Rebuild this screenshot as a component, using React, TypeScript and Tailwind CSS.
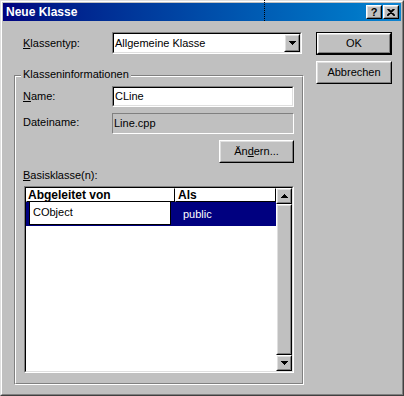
import React from 'react';

const font = { fontFamily: '"Liberation Sans", Arial, sans-serif' };

function Raised({ className = '', children }: { className?: string; children?: React.ReactNode }) {
  return (
    <div className={`border border-t-white border-l-white border-r-black border-b-black bg-[#c0c0c0] ${className}`}>
      <div className="w-full h-full border border-t-[#dfdfdf] border-l-[#dfdfdf] border-r-[#808080] border-b-[#808080] flex items-center justify-center">
        {children}
      </div>
    </div>
  );
}

function Sunken({ className = '', inner = 'bg-white', children }: { className?: string; inner?: string; children?: React.ReactNode }) {
  return (
    <div className={`border border-t-[#808080] border-l-[#808080] border-r-white border-b-white ${className}`}>
      <div className={`w-full h-full border border-t-black border-l-black border-r-[#dfdfdf] border-b-[#dfdfdf] ${inner}`}>
        {children}
      </div>
    </div>
  );
}

function Arrow({ up = false }: { up?: boolean }) {
  return (
    <svg width="7" height="4" viewBox="0 0 7 4">
      <path d={up ? 'M3.5 0 L7 4 L0 4 Z' : 'M0 0 L7 0 L3.5 4 Z'} fill="black" shapeRendering="crispEdges" />
    </svg>
  );
}

export default function App() {
  return (
    <div style={font} className="w-[404px] h-[396px] bg-[#c0c0c0] text-[11px] text-black border border-t-[#dfdfdf] border-l-[#dfdfdf] border-r-[#404040] border-b-[#404040]">
      <div className="h-full flex flex-col p-px border border-t-white border-l-white border-r-[#808080] border-b-[#808080]">
        {/* title bar */}
        <div className="relative h-[18px] flex items-center pl-[3px] pr-[2px] bg-gradient-to-r from-[#000080] to-[#1084d0]">
          <span className="text-[12px] font-bold text-white leading-none">Neue Klasse</span>
          <div className="absolute left-[261px] top-[-3px] h-[21px] border-l border-dotted border-black" />
          <div className="ml-auto flex gap-[1px]">
            <Raised className="w-[16px] h-[14px]">
              <span className="text-[11px] font-bold leading-none">?</span>
            </Raised>
            <Raised className="w-[16px] h-[14px]">
              <svg width="8" height="7" viewBox="0 0 8 7">
                <path d="M0.5 0 L7.5 7 M1.5 0 L8 6.5 M7.5 0 L0.5 7 M6.5 0 L0 6.5" stroke="black" strokeWidth="1.2" />
              </svg>
            </Raised>
          </div>
        </div>

        {/* body */}
        <div className="flex pl-[11px] pt-[11px]">
          <div className="w-[290px] flex flex-col">
            <div className="h-[22px] flex items-center">
              <span className="w-[98px] pl-[9px]"><u>K</u>lassentyp:</span>
              <Sunken className="w-[190px] h-[22px]">
                <div className="h-full flex items-center">
                  <span className="pl-[1px]">Allgemeine Klasse</span>
                  <Raised className="ml-auto w-[16px] h-[18px]">
                    <Arrow />
                  </Raised>
                </div>
              </Sunken>
            </div>

            {/* group box */}
            <div className="relative mt-[21px] h-[310px] border border-t-[#808080] border-l-[#808080] border-r-white border-b-white">
              <span className="absolute left-[6px] top-[-8px] px-[2px] bg-[#c0c0c0] leading-[13px]">Klasseninformationen</span>
              <div className="h-full border border-t-white border-l-white border-r-[#808080] border-b-[#808080] pl-[7px] flex flex-col">
                <div className="mt-[9px] flex items-center">
                  <span className="w-[89px]"><u>N</u>ame:</span>
                  <Sunken className="w-[182px] h-[21px]">
                    <div className="h-full flex items-center pl-[1px]">CLine</div>
                  </Sunken>
                </div>
                <div className="mt-[6px] flex items-center">
                  <span className="w-[89px] -mt-[3px]">Dateiname:</span>
                  <div className="w-[182px] h-[21px] border border-t-[#808080] border-l-[#808080] border-r-white border-b-white flex items-center pl-[1px]">
                    Line.cpp
                  </div>
                </div>
                <Raised className="mt-[6px] ml-[196px] w-[75px] h-[23px]">
                  <span>Än<u>d</u>ern...</span>
                </Raised>
                <span className="mt-[6px] leading-[13px]"><u>B</u>asisklasse(n):</span>

                {/* list view */}
                <Sunken className="mt-[4px] ml-[1px] w-[270px] h-[187px]">
                  <div className="h-full flex">
                    <div className="w-[250px] flex flex-col">
                      <div className="h-[14px] flex text-[12px] font-bold leading-[13px]">
                        <div className="w-[149px] border border-t-white border-l-white border-r-black border-b-black pl-[1px] overflow-hidden">Abgeleitet von</div>
                        <div className="flex-1 border border-t-white border-l-white border-r-black border-b-black pl-[2px] overflow-hidden">Als</div>
                      </div>
                      <div className="h-[24px] flex bg-[#000080]">
                        <div className="relative w-[149px]">
                          <div className="absolute left-[3px] top-[-1px] w-[142px] h-[24px] bg-white border border-black pl-[3px] pt-[2px]">CObject</div>
                        </div>
                        <div className="pl-[8px] flex items-center text-white">public</div>
                      </div>
                    </div>
                    <div className="w-[16px] flex flex-col">
                      <Raised className="h-[16px]"><Arrow up /></Raised>
                      <Raised className="flex-1" />
                      <Raised className="h-[16px]"><Arrow /></Raised>
                    </div>
                  </div>
                </Sunken>
              </div>
            </div>
          </div>

          {/* right buttons */}
          <div className="ml-[12px] w-[76px] flex flex-col">
            <div className="h-[23px] border border-black">
              <Raised className="w-full h-full">
                <span>OK</span>
              </Raised>
            </div>
            <Raised className="mt-[6px] h-[23px]">
              <span>Abbrechen</span>
            </Raised>
          </div>
        </div>
      </div>
    </div>
  );
}
